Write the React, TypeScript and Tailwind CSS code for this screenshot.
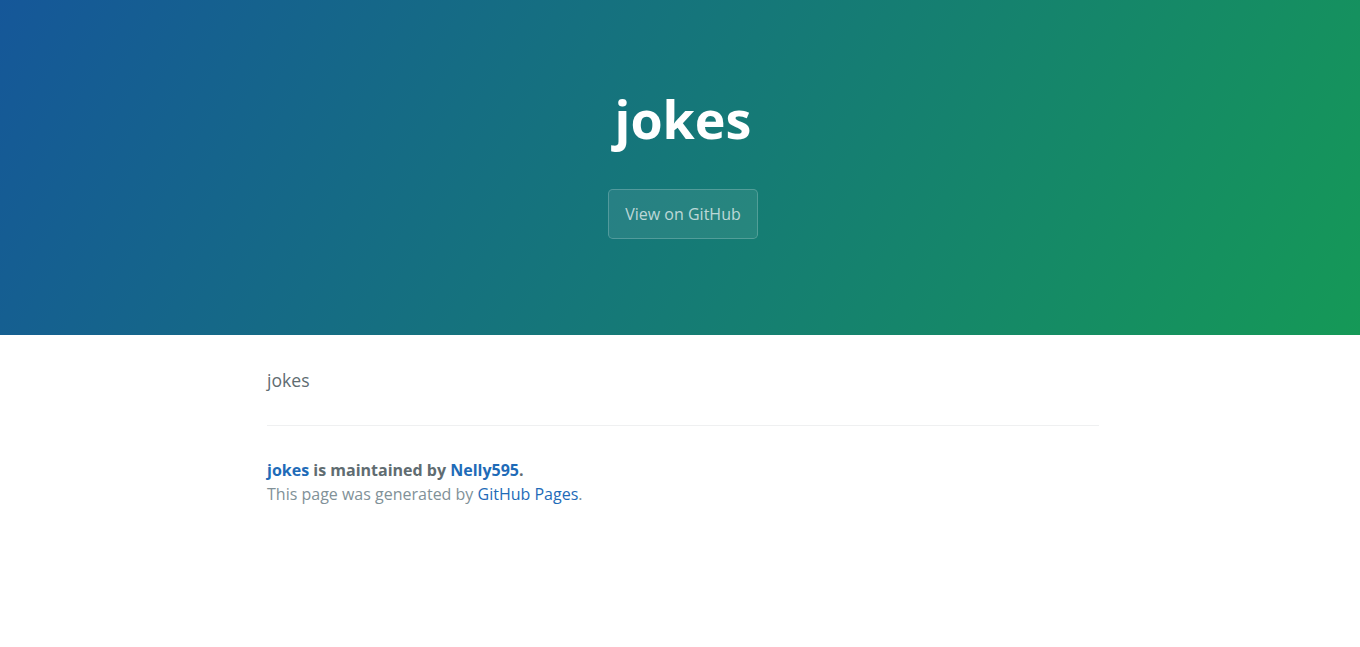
import React from 'react';

const App: React.FC = () => {
  return (
    <div className="min-h-[647px] bg-white font-['Open_Sans',sans-serif] text-[#606c71]">
      {/* Page header */}
      <header className="flex flex-col items-center bg-[linear-gradient(120deg,#155799,#159957)] pt-20 pb-24 pl-[6px] text-white">
        <h1 className="text-[3.25rem] font-bold leading-[1.5]">jokes</h1>
        <a
          href="#"
          className="mt-[31px] rounded-[0.3rem] border border-white/20 bg-white/[0.08] px-4 py-3 text-base leading-6 text-white/70"
        >
          View on GitHub
        </a>
      </header>

      {/* Main content */}
      <main className="ml-[267px] w-[832px] pt-8 text-[1.1rem] leading-[1.5]">
        <p>jokes</p>

        <footer className="mt-8 border-t border-[#eff0f1] pt-8 text-base leading-6">
          <span className="block font-bold">
            <a href="#" className="text-[#1e6bb8]">jokes</a> is maintained by{' '}
            <a href="#" className="text-[#1e6bb8]">Nelly595</a>.
          </span>
          <span className="block text-[#819198]">
            This page was generated by <a href="#" className="text-[#1e6bb8]">GitHub Pages</a>.
          </span>
        </footer>
      </main>
    </div>
  );
};

export default App;
